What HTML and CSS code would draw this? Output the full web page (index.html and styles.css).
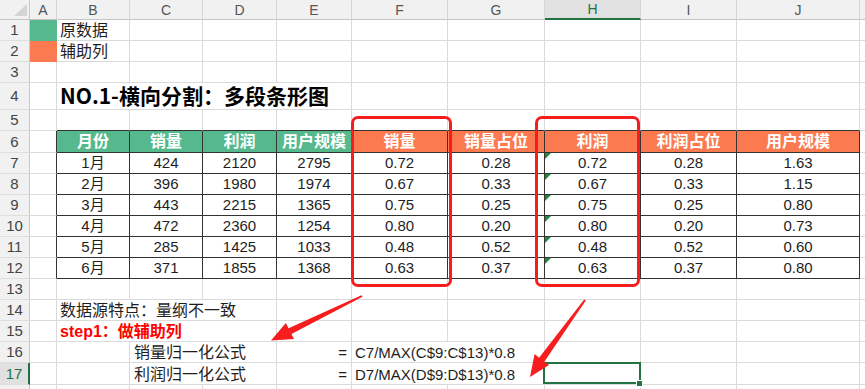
FILE: index.html
```html
<!DOCTYPE html>
<html lang="zh-CN">
<head>
<meta charset="utf-8">
<title>NO.1-横向分割：多段条形图</title>
<link rel="stylesheet" href="styles.css">
</head>
<body>
<div class="page">
  <div class="sheet">
    <!-- column headers -->
    <div class="corner"></div>
    <div class="ch">A</div><div class="ch">B</div><div class="ch">C</div><div class="ch">D</div><div class="ch">E</div>
    <div class="ch">F</div><div class="ch">G</div><div class="ch sel-col">H</div><div class="ch">I</div><div class="ch">J</div><div class="ch"></div>

    <!-- row 1 -->
    <div class="rh">1</div><div class="fill-g"></div><div class="txt">原数据</div>
    <div></div><div></div><div></div><div></div><div></div><div></div><div></div><div></div><div></div>
    <!-- row 2 -->
    <div class="rh">2</div><div class="fill-o"></div><div class="txt">辅助列</div>
    <div></div><div></div><div></div><div></div><div></div><div></div><div></div><div></div><div></div>
    <!-- row 3 -->
    <div class="rh">3</div>
    <div></div><div></div><div></div><div></div><div></div><div></div><div></div><div></div><div></div><div></div><div></div>
    <!-- row 4 -->
    <div class="rh">4</div><div></div>
    <div class="title">NO.1-横向分割：多段条形图</div>
    <div></div><div></div><div></div><div></div><div></div><div></div>
    <!-- row 5 -->
    <div class="rh">5</div><div></div>
    <div class="tt"></div><div class="tt"></div><div class="tt"></div><div class="tt"></div><div class="tt"></div>
    <div class="tt"></div><div class="tt"></div><div class="tt"></div><div class="tt"></div><div></div>
    <!-- row 6 -->
    <div class="rh">6</div><div class="tl"></div>
    <div class="t hg">月份</div><div class="t hg">销量</div><div class="t hg">利润</div><div class="t hg">用户规模</div>
    <div class="t ho">销量</div><div class="t ho">销量占位</div><div class="t ho">利润</div><div class="t ho">利润占位</div><div class="t ho">用户规模</div>
    <div></div>
    <!-- row 7 -->
    <div class="rh">7</div><div class="tl"></div>
    <div class="t">1月</div><div class="t">424</div><div class="t">2120</div><div class="t">2795</div>
    <div class="t">0.72</div><div class="t">0.28</div><div class="t flag">0.72</div><div class="t">0.28</div><div class="t">1.63</div>
    <div></div>
    <!-- row 8 -->
    <div class="rh">8</div><div class="tl"></div>
    <div class="t">2月</div><div class="t">396</div><div class="t">1980</div><div class="t">1974</div>
    <div class="t">0.67</div><div class="t">0.33</div><div class="t flag">0.67</div><div class="t">0.33</div><div class="t">1.15</div>
    <div></div>
    <!-- row 9 -->
    <div class="rh">9</div><div class="tl"></div>
    <div class="t">3月</div><div class="t">443</div><div class="t">2215</div><div class="t">1365</div>
    <div class="t">0.75</div><div class="t">0.25</div><div class="t flag">0.75</div><div class="t">0.25</div><div class="t">0.80</div>
    <div></div>
    <!-- row 10 -->
    <div class="rh">10</div><div class="tl"></div>
    <div class="t">4月</div><div class="t">472</div><div class="t">2360</div><div class="t">1254</div>
    <div class="t">0.80</div><div class="t">0.20</div><div class="t flag">0.80</div><div class="t">0.20</div><div class="t">0.73</div>
    <div></div>
    <!-- row 11 -->
    <div class="rh">11</div><div class="tl"></div>
    <div class="t">5月</div><div class="t">285</div><div class="t">1425</div><div class="t">1033</div>
    <div class="t">0.48</div><div class="t">0.52</div><div class="t flag">0.48</div><div class="t">0.52</div><div class="t">0.60</div>
    <div></div>
    <!-- row 12 -->
    <div class="rh">12</div><div class="tl"></div>
    <div class="t">6月</div><div class="t">371</div><div class="t">1855</div><div class="t">1368</div>
    <div class="t">0.63</div><div class="t">0.37</div><div class="t flag">0.63</div><div class="t">0.37</div><div class="t">0.80</div>
    <div></div>
    <!-- row 13 -->
    <div class="rh">13</div>
    <div></div><div></div><div></div><div></div><div></div><div></div><div></div><div></div><div></div><div></div><div></div>
    <!-- row 14 -->
    <div class="rh">14</div><div></div>
    <div class="txt span3">数据源特点：量纲不一致</div>
    <div></div><div></div><div></div><div></div><div></div><div></div><div></div>
    <!-- row 15 -->
    <div class="rh">15</div><div></div>
    <div class="txt span3 step">step1：做辅助列</div>
    <div></div><div></div><div></div><div></div><div></div><div></div><div></div>
    <!-- row 16 -->
    <div class="rh">16</div><div></div><div></div>
    <div class="txt span2 label">销量归一化公式</div>
    <div class="eq">=</div>
    <div class="txt span2 formula">C7/MAX(C$9:C$13)*0.8</div>
    <div></div><div></div><div></div><div></div>
    <!-- row 17 -->
    <div class="rh sel-row">17</div><div></div><div></div>
    <div class="txt span2 label">利润归一化公式</div>
    <div class="eq">=</div>
    <div class="txt span2 formula">D7/MAX(D$9:D$13)*0.8</div>
    <div class="sel"></div><div></div><div></div><div></div>
    <!-- row 18 (only the top edge is in view) -->
    <div class="rh"></div>
    <div></div><div></div><div></div><div></div><div></div><div></div><div></div><div></div><div></div><div></div><div></div>
  </div>

  <div class="mark mark-sales"></div>
  <div class="mark mark-profit"></div>
  <svg class="arrows" width="865" height="389" viewBox="0 0 865 389" aria-hidden="true">
    <polygon points="271,340.5 294,339 291.5,334 362.5,296.8 361.5,295.2 288.6,328.3 285.8,323"/>
    <polygon points="530,377 549,365 544.3,361.8 585.8,300.6 584.2,299.4 539.1,357.8 534.6,354"/>
  </svg>
</div>
</body>
</html>
```

FILE: styles.css
```css
html, body {
  margin: 0;
  padding: 0;
  overflow: hidden;
  background: #ffffff;
}

body {
  font-family: "Liberation Sans", "Noto Sans CJK SC", sans-serif;
  color: #1e1e1e;
}

.page {
  position: relative;
  width: 865px;
  height: 389px;
  overflow: hidden;
}

.sheet {
  display: grid;
  grid-template-columns: 30px 27px 73px 73px 74px 75px 96px 97px 96px 96px 123px 40px;
  grid-template-rows: 20px 21px 21px 21px 27px 21px 22px repeat(10, 21px) 22px 21px;
}

.sheet > div {
  box-sizing: border-box;
  border-right: 1px solid #dadada;
  border-bottom: 1px solid #dadada;
  display: flex;
  align-items: center;
  white-space: nowrap;
  font-size: 16px;
  line-height: 16px;
  padding: 0 3px;
  min-width: 0;
}

/* headers */
.sheet > .corner {
  position: relative;
  background: #f1f1f1;
  border-right-color: #c9c9c9;
  border-bottom-color: #c4c4c4;
}
.corner::after {
  content: "";
  position: absolute;
  right: 2px;
  bottom: 3px;
  width: 0;
  height: 0;
  border-left: 13px solid transparent;
  border-bottom: 12px solid #d4d4d4;
}

.sheet > .ch {
  background: #f1f1f1;
  border-right-color: #d6d6d6;
  border-bottom-color: #c4c4c4;
  justify-content: center;
  font-size: 14px;
  color: #555555;
  padding: 0;
}
.sheet > .sel-col {
  background: #e1e1e1;
  color: #217346;
  border-bottom: 2px solid #217346;
}

.sheet > .rh {
  background: #f1f1f1;
  border-right-color: #c9c9c9;
  border-bottom-color: #dedede;
  justify-content: center;
  font-size: 15px;
  color: #444444;
  padding: 0;
}
.sheet > .sel-row {
  background: #e1e1e1;
  color: #217346;
  border-right: 2px solid #217346;
}

/* legend fills */
.sheet > .fill-g {
  background: #55b98d;
  border-color: #55b98d;
}
.sheet > .fill-o {
  background: #fc7a50;
  border-color: #fc7a50;
}

/* text cells */
.sheet > .txt {
  color: #1e1e1e;
  padding-top: 2px;
}
.sheet > .span2 { grid-column: span 2; }
.sheet > .span3 { grid-column: span 3; }
.sheet > .label { padding-left: 4px; }
.sheet > .formula { font-size: 15px; }

.sheet > .title {
  grid-column: span 4;
  align-items: flex-end;
  padding-bottom: 3px;
  font-family: "Noto Sans CJK SC", sans-serif;
  font-size: 21px;
  line-height: 21px;
  font-weight: 700;
  color: #000000;
}

.sheet > .step {
  color: #ff0000;
  font-weight: 700;
}

.sheet > .eq {
  justify-content: flex-end;
  padding-right: 4px;
  padding-top: 2px;
  font-size: 15px;
}

/* data table */
.sheet > .tt { border-bottom-color: #333333; }
.sheet > .tl { border-right-color: #333333; }
.sheet > .t {
  justify-content: center;
  border-right-color: #333333;
  border-bottom-color: #333333;
  padding: 0;
  font-size: 15px;
}
.sheet > .hg {
  background: #55b98d;
  color: #ffffff;
  font-weight: 700;
  font-size: 16px;
}
.sheet > .ho {
  background: #fc7a50;
  color: #ffffff;
  font-weight: 700;
  font-size: 16px;
}

.sheet > .flag { position: relative; }
.flag::before {
  content: "";
  position: absolute;
  top: 0;
  left: 0;
  width: 0;
  height: 0;
  border-top: 6px solid #1f8a3c;
  border-right: 6px solid transparent;
}

/* selected cell */
.sheet > .sel { position: relative; }
.sel::after {
  content: "";
  position: absolute;
  top: -1px;
  left: -2px;
  right: -1px;
  bottom: 0;
  border: 2px solid #217346;
}
.sel::before {
  content: "";
  position: absolute;
  right: -3px;
  bottom: -3px;
  width: 5px;
  height: 5px;
  background: #217346;
  border: 1px solid #ffffff;
  z-index: 1;
}

/* annotations */
.mark {
  position: absolute;
  box-sizing: border-box;
  border: 3px solid #f51d1d;
  border-radius: 7px;
}
.mark-sales {
  left: 351px;
  top: 116px;
  width: 101px;
  height: 171px;
}
.mark-profit {
  left: 535px;
  top: 116px;
  width: 105px;
  height: 171px;
}

.arrows {
  position: absolute;
  left: 0;
  top: 0;
  fill: #f51d1d;
  pointer-events: none;
}
```
